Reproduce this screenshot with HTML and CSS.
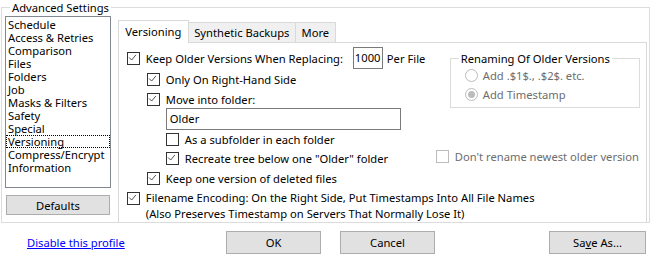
FILE: index.html
```html
<!DOCTYPE html>
<html lang="en">
<head>
    <meta charset="UTF-8">
    <meta name="viewport" content="width=device-width, initial-scale=1.0">
    <title>Advanced Settings</title>
    <link rel="stylesheet" href="styles.css">
</head>
<body>
    <!-- Advanced Settings group -->
    <fieldset class="group main-group">
        <legend>Advanced Settings</legend>
        <div class="settings">
            <div class="side">
                <ul class="listbox">
                    <li>Schedule</li>
                    <li>Access &amp; Retries</li>
                    <li>Comparison</li>
                    <li>Files</li>
                    <li>Folders</li>
                    <li>Job</li>
                    <li>Masks &amp; Filters</li>
                    <li>Safety</li>
                    <li>Special</li>
                    <li class="focused">Versioning</li>
                    <li>Compress/Encrypt</li>
                    <li>Information</li>
                </ul>
                <button class="btn defaults">Defaults</button>
            </div>

            <div class="tabs">
                <div class="tab-strip">
                    <div class="tab tab-versioning active">Versioning</div>
                    <div class="tab tab-synthetic">Synthetic Backups</div>
                    <div class="tab tab-more">More</div>
                </div>

                <div class="tab-panel">
                    <div class="top-area">
                        <div class="options">
                            <div class="row row-first">
                                <span class="box"><svg viewBox="0 0 13 13"><path d="M2.5 6.5l3 3 5-6"/></svg></span>
                                <span class="label label-keep">Keep Older Versions When Replacing:</span>
                                <span class="spin">1000</span>
                                <span class="unit">Per File</span>
                            </div>
                            <div class="row indent1 gap1">
                                <span class="box"><svg viewBox="0 0 13 13"><path d="M2.5 6.5l3 3 5-6"/></svg></span>
                                <span class="label">Only On Right-Hand Side</span>
                            </div>
                            <div class="row indent1 gap2">
                                <span class="box"><svg viewBox="0 0 13 13"><path d="M2.5 6.5l3 3 5-6"/></svg></span>
                                <span class="label">Move into folder:</span>
                            </div>
                            <div class="textbox indent2">Older</div>
                            <div class="row indent2">
                                <span class="box"></span>
                                <span class="label">As a subfolder in each folder</span>
                            </div>
                            <div class="row indent2 gap1">
                                <span class="box"><svg viewBox="0 0 13 13"><path d="M2.5 6.5l3 3 5-6"/></svg></span>
                                <span class="label">Recreate tree below one "Older" folder</span>
                            </div>
                            <div class="row indent1 gap2">
                                <span class="box"><svg viewBox="0 0 13 13"><path d="M2.5 6.5l3 3 5-6"/></svg></span>
                                <span class="label">Keep one version of deleted files</span>
                            </div>
                        </div>

                        <div class="renaming">
                            <fieldset class="group rename-group">
                                <legend>Renaming Of Older Versions</legend>
                                <div class="radio-row">
                                    <span class="radio"></span>
                                    <span class="label">Add .$1$., .$2$. etc.</span>
                                </div>
                                <div class="radio-row gap1">
                                    <span class="radio selected"></span>
                                    <span class="label">Add Timestamp</span>
                                </div>
                            </fieldset>
                            <div class="row disabled newest">
                                <span class="box"></span>
                                <span class="label">Don't rename newest older version</span>
                            </div>
                        </div>
                    </div>

                    <div class="row-multi">
                        <span class="box"><svg viewBox="0 0 13 13"><path d="M2.5 6.5l3 3 5-6"/></svg></span>
                        <span class="label">Filename Encoding: On the Right Side, Put Timestamps Into All File Names<br>(Also Preserves Timestamp on Servers That Normally Lose It)</span>
                    </div>
                </div>
            </div>
        </div>
    </fieldset>

    <!-- Dialog buttons -->
    <div class="footer">
        <div class="link-cell"><a href="#" class="link">Disable this profile</a></div>
        <button class="btn ok">OK</button>
        <button class="btn cancel">Cancel</button>
        <button class="btn save">Sa<u>v</u>e As...</button>
    </div>
</body>
</html>
```

FILE: styles.css
```css
* {
    box-sizing: border-box;
}

body {
    margin: 0;
    width: 658px;
    height: 260px;
    overflow: hidden;
    background: #fff;
    color: #000;
    font-family: "Noto Sans", "Open Sans", sans-serif;
    font-size: 11.2px;
}

/* Group boxes */
.group {
    margin: 0;
    padding: 0;
    min-width: 0;
    border: 1px solid #dcdcdc;
}

.group legend {
    margin-left: 8px;
    padding: 0 2px;
    line-height: 15px;
}

.main-group {
    margin-left: 1px;
    width: 649px;
    height: 223px;
}

.settings {
    display: flex;
    gap: 7px;
    height: 207px;
    padding: 1px 2px 0 3px;
}

/* Left list */
.side {
    width: 106px;
    display: flex;
    flex-direction: column;
}

.listbox {
    list-style: none;
    margin: 0;
    padding: 1px 0 0 0;
    height: 172px;
    border: 1px solid #828790;
    background: #fff;
}

.listbox li {
    height: 13px;
    line-height: 13px;
    padding-left: 2px;
    white-space: nowrap;
}

.listbox li.focused {
    outline: 1px dotted #000;
    outline-offset: -1px;
}

.btn {
    font-family: inherit;
    font-size: inherit;
    color: #000;
    background: #e1e1e1;
    border: 1px solid #adadad;
    padding: 0;
    border-radius: 0;
}

.defaults {
    height: 20px;
    margin: 7px 1px 0 1px;
}

/* Tabs */
.tabs {
    width: 530px;
    display: flex;
    flex-direction: column;
}

.tab-strip {
    display: flex;
    align-items: flex-end;
    height: 22px;
    margin-top: 4px;
}

.tab {
    height: 20px;
    line-height: 19px;
    text-align: center;
    background: #f0f0f0;
    border: 1px solid #d9d9d9;
    border-bottom: none;
    white-space: nowrap;
}

.tab + .tab {
    margin-left: -1px;
}

.tab.active {
    position: relative;
    z-index: 1;
    height: 23px;
    line-height: 21px;
    margin-bottom: -1px;
    background: #fff;
}

.tab-versioning { width: 71px; }
.tab-synthetic { width: 108px; }
.tab-more { width: 41px; }

.tab-panel {
    flex: 1;
    background: #fff;
    border: 1px solid #d9d9d9;
    border-bottom: none;
    padding: 4px 0 0 8px;
}

.top-area {
    display: flex;
}

.options {
    width: 309px;
}

.row {
    display: flex;
    align-items: center;
    height: 18px;
    white-space: nowrap;
}

.row-first {
    height: 22px;
}

.gap1 { margin-top: 1px; }
.gap2 { margin-top: 2px; }
.indent1 { margin-left: 20px; }
.indent2 { margin-left: 39px; }

.box {
    flex: none;
    width: 13px;
    height: 13px;
    border: 1px solid #333;
    background: #fff;
    margin-right: 6px;
}

.box svg {
    display: block;
    width: 11px;
    height: 11px;
    margin: -1px 0 0 -1px;
    overflow: visible;
}

.box svg path {
    fill: none;
    stroke: #333;
    stroke-width: 1;
}

.label-keep {
    width: 207px;
}

.spin {
    width: 30px;
    height: 22px;
    line-height: 20px;
    border: 1px solid #7a7a7a;
    padding-left: 1px;
}

.unit {
    margin-left: 4px;
}

.textbox {
    width: 235px;
    height: 22px;
    line-height: 20px;
    border: 1px solid #7a7a7a;
    padding-left: 3px;
}

/* Right side */
.renaming {
    flex: 1;
}

.rename-group {
    width: 190px;
    margin: 4px 0 0 14px;
    padding: 0 0 4px 0;
}

.radio-row {
    display: flex;
    align-items: center;
    height: 18px;
    padding-left: 14px;
    color: #6d6d6d;
    white-space: nowrap;
}

.radio {
    flex: none;
    width: 13px;
    height: 13px;
    border: 1px solid #bcbcbc;
    border-radius: 50%;
    margin-right: 5px;
    display: flex;
    align-items: center;
    justify-content: center;
}

.radio.selected::after {
    content: "";
    width: 7px;
    height: 7px;
    border-radius: 50%;
    background: #bcbcbc;
}

.disabled {
    color: #6d6d6d;
}

.disabled .box {
    border-color: #bcbcbc;
}

.newest {
    margin-top: 39px;
}

.row-multi {
    display: flex;
    align-items: flex-start;
    margin-top: 3px;
    line-height: 16px;
    white-space: nowrap;
}

.row-multi .box {
    margin-top: 2px;
}

/* Footer */
.footer {
    display: flex;
    align-items: center;
    height: 23px;
    margin-top: 8px;
}

.link-cell {
    width: 226px;
    padding-left: 27px;
}

.link {
    color: #0000ff;
}

.ok, .cancel, .save {
    height: 23px;
}

.ok { width: 95px; }

.cancel {
    width: 95px;
    margin-left: 19px;
}

.save {
    width: 97px;
    margin-left: auto;
    margin-right: 12px;
}
```
